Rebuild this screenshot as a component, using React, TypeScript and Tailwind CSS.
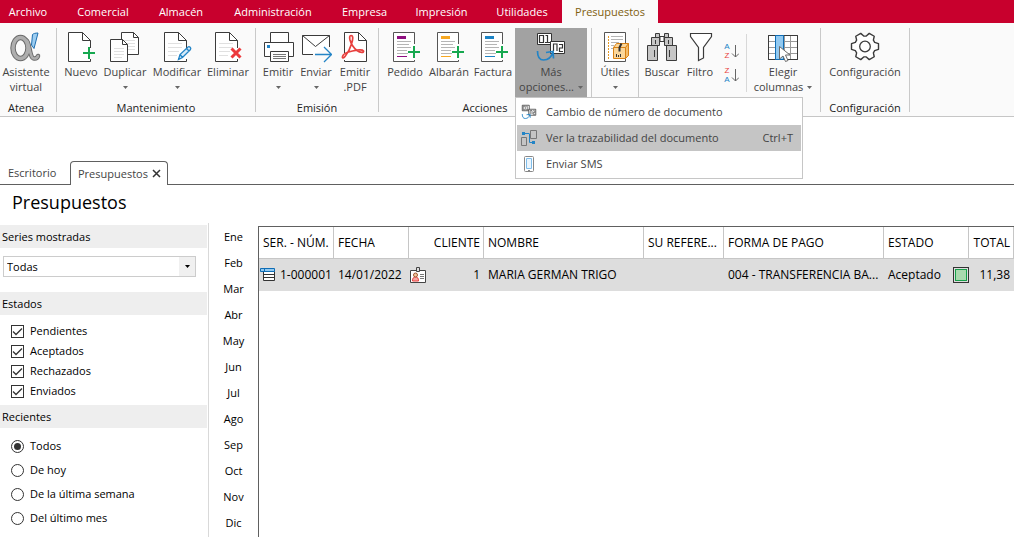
import React, { useState } from 'react';
import { clsx } from 'clsx';

const menuTabs = [
    { name: 'Archivo', className: 'w-[62px] pr-1.5' },
    { name: 'Comercial', className: 'w-[82px]' },
    { name: 'Almacén', className: 'w-[74px]' },
    { name: 'Administración', className: 'w-[110px]' },
    { name: 'Empresa', className: 'w-[73px]' },
    { name: 'Impresión', className: 'w-[81px]' },
    { name: 'Utilidades', className: 'w-20' },
    { name: 'Presupuestos', className: 'w-24' },
];

const months = ['Ene', 'Feb', 'Mar', 'Abr', 'May', 'Jun', 'Jul', 'Ago', 'Sep', 'Oct', 'Nov', 'Dic'];
const states = ['Pendientes', 'Aceptados', 'Rechazados', 'Enviados'];
const recents = ['Todos', 'De hoy', 'De la última semana', 'Del último mes'];

const Icon: React.FC<{ children: React.ReactNode }> = ({ children }) => (
    <svg className="h-8 w-8 shrink-0" viewBox="0 0 32 32" fill="none" stroke="#3b3b3b" aria-hidden="true">
        {children}
    </svg>
);

const AlphaIcon = () => (
    <Icon>
        <ellipse cx="10.5" cy="17" rx="7.5" ry="10.5" stroke="#6a6a6a" strokeWidth="5.5" />
        <path d="M17 10c3 3 2.500 17 7 17.500 2.500.3 3.500-1 4-2.500" stroke="#6a6a6a" strokeWidth="4.500" strokeLinecap="round" />
        <ellipse cx="10.5" cy="17" rx="7.5" ry="10.5" stroke="#aeaeae" strokeWidth="3.5" />
        <path d="M17 10c3 3 2.500 17 7 17.500 2.500.3 3.500-1 4-2.500" stroke="#aeaeae" strokeWidth="2.600" strokeLinecap="round" />
        <path d="M22.500 3.500c1-1 3-1.500 5.500-1.500L24 17.500l-2.500-3.500z" fill="#9ccdf1" stroke="#1f6fb0" />
    </Icon>
);

const PageOutline = () => (
    <>
        <path d="M25.500 17V9.500L17.500 1.500H3.500V30.500H25.500V28" fill="#fff" />
        <path d="M17.500 1.500V9.500H25.500" />
    </>
);

const PageLines = () => <path d="M7 12.500h14M7 16.500h14M7 20.500h11M7 24.500h9" stroke="#e0e0e0" />;

const NewIcon = () => (
    <Icon>
        <PageOutline />
        <path d="M18 22h12M24 16v12" stroke="#16a84f" strokeWidth="2" />
    </Icon>
);

const DuplicateIcon = () => (
    <Icon>
        <path d="M12.500 1.500H24.500L29.500 6.500V23.500H12.500z" fill="#fff" />
        <path d="M24.500 1.500V6.500H29.500" />
        <path d="M15 9.500h11M15 12.500h11M15 15.500h11M15 18.500h11" stroke="#e0e0e0" />
        <path d="M1.500 8.500H13.500L18.500 13.500V30.500H1.500z" fill="#fff" />
        <path d="M13.500 8.500V13.500H18.500" />
        <path d="M5 17.500h10M5 20.500h10M5 23.500h10M5 26.500h8" stroke="#e0e0e0" />
    </Icon>
);

const EditIcon = () => (
    <Icon>
        <PageOutline />
        <PageLines />
        <path d="M17.500 28.500l1.500-5 8-7.500c1.500-1 3.500 1 2.500 2.500l-8 8zM19 23.500l2.500 3M25.500 17.500l2.500 2.500" fill="#d7ebf9" stroke="#2384c6" strokeWidth="1.300" />
    </Icon>
);

const DeleteIcon = () => (
    <Icon>
        <PageOutline />
        <PageLines />
        <path d="M19.500 17.500l9 9M28.500 17.500l-9 9" stroke="#ec3a3d" strokeWidth="3" />
    </Icon>
);

const PrintIcon = () => (
    <Icon>
        <path d="M8.500 11.500V1.500H26.500V11.500" fill="#fff" />
        <path d="M8 25.500H2.500V11.500H31.500V25.500H27" fill="#fff" />
        <path d="M8.500 20.500H26.500V30.500H8.500z" fill="#fff" />
        <path d="M11 23.500h13M11 25.500h13M11 27.500h13" stroke="#777" />
        <path d="M5 14h3v3H5z" fill="#2384c6" stroke="none" />
    </Icon>
);

const SendIcon = () => (
    <Icon>
        <path d="M13 23.500H2.500V4.500H29.500V16" fill="#fff" />
        <path d="M2.500 4.500l13 11 14-11" />
        <path d="M15 23.500H31M24 16l7.500 7.500L24 31" stroke="#2384c6" strokeWidth="1.300" />
    </Icon>
);

const PdfIcon = () => (
    <Icon>
        <path d="M5.500 1.500H19.500L27.500 9.500V30.500H5.500z" fill="#fff" stroke="none" />
        <path d="M5.500 29V30.500H27.500V9.500L19.500 1.500H5.500V22" />
        <path d="M19.500 1.500V9.500H27.500" />
        <path
            d="M12 4.500c2.500 0 2 4 .5 8.500-1.500 5-4 9.500-6.500 12.500-1.500 2-3 1.500-2.500 0 .5-2.500 5-4.500 10-5.500 4.500-1 10-1.500 11 0 .8 1.600-3 2.200-6.500-.5-4-3-6-7-7-10.500-.6-2.500-.5-4.500 1-4.500z"
            stroke="#e8403e"
            strokeWidth="1.700"
        />
    </Icon>
);

const OrderIcon: React.FC<{ color: string }> = ({ color }) => (
    <Icon>
        <path d="M25.500 13V1.500H4.500V30.500H25.500V29" fill="#fff" stroke="#555" />
        <path d="M8 5h9v3H8z" fill={color} stroke="none" />
        <path d="M8 10.500h14M8 13.500h12M8 16.500h14M8 19.500h10M8 22.500h11" stroke="#b5b5b5" />
        <path d="M8 25.500h10" stroke={color} />
        <path d="M19 21h12M25 15v12" stroke="#16a84f" strokeWidth="2" />
    </Icon>
);

const NumbersDrawing = () => (
    <>
        <path d="M2.500 2.500H16.500V13.500H2.500z" fill="#fff" stroke="#333" />
        <path d="M4.500 4.500h4v7h-4zM10.500 4.500h2v7M10 11.500h5" stroke="#333" strokeWidth="1.200" />
        <path d="M15.500 10.500H29.500V22.500H15.500z" fill="#fff" stroke="#333" />
        <path d="M18.500 20v-7h3.500v7M24 13.500h3.500v3.500H24.500v3.500h3.500" stroke="#333" strokeWidth="1.200" />
        <path d="M2.500 20c0 6 2 9 6 9 5 0 8-3 9.500-8M11 21.500l7-1 .5 7" stroke="#2384c6" strokeWidth="1.700" />
    </>
);

const ToolsIcon = () => (
    <Icon>
        <path d="M5.500 1.500H26.500V30.500H5.500z" fill="#fff" stroke="#555" />
        <path d="M12 5.500h12M12 8.500h12M12 11.500h8M12 14.500h3M12 17.500h2" stroke="#b5b5b5" />
        <path d="M9.500 5v23" stroke="#e59a25" strokeDasharray="2 1" />
        <path d="M14.500 16.500L17.500 12.500H29.500V24.500L26.500 27.500H14.500z" fill="#fbd699" stroke="#d98215" strokeLinejoin="round" />
        <path d="M26.500 16.500L29.500 12.500V24.500L26.500 27.500z" fill="#f4bb68" stroke="#d98215" strokeLinejoin="round" />
        <path d="M14.500 16.500h12" stroke="#d98215" />
        <path d="M22.500 12.500L20.500 16.500V20.500" stroke="#333" strokeWidth="2" />
        <path d="M17.500 23v3M19.500 24v2M21.500 23v3" stroke="#333" />
    </Icon>
);

const BinocularsIcon = () => (
    <Icon>
        <path d="M14 5.500h4v5h-4z" fill="#fff" />
        <path d="M9.500 2.500h4v4h-4zM18.500 2.500h4v4h-4zM5.500 6.500h8v8h-8zM18.500 6.500h8v8h-8zM1.500 14.500h10v15h-10zM20.500 14.500h10v15h-10z" fill="#c6c6c6" />
        <path d="M9.500 9v4M22.500 9v4M8.500 19v7M23.500 19v7" />
    </Icon>
);

const FilterIcon = () => (
    <Icon>
        <path d="M6.500 2.500H27.500V5.500L19.500 16.500V27L14.500 29.500V16.500L6.500 5.500z" fill="#fff" strokeWidth="1.200" />
    </Icon>
);

const ColumnsIcon = () => (
    <Icon>
        <path d="M1.500 4.500H30.500V28.500H1.500z" fill="#fff" />
        <path d="M2 10.500h28M2 16.500h28M2 22.500h28M17.500 5v23M23.500 5v23" stroke="#9a9a9a" />
        <path d="M1.500 4.500H30.500V28.500H1.500z" />
        <path d="M8.500 4.500H16.500V28.500H8.500z" fill="#92c9f0" stroke="#0f6db5" />
        <path d="M12.500 15.500V28l3.500-3 2.500 5.500 2.500-1-2.500-5.500h4.500z" fill="#fff" stroke="#6b6b6b" />
    </Icon>
);

// six teeth, one every 60 degrees
const gearPoints = [0, 60, 120, 180, 240, 300]
    .flatMap((deg) => [[-23, 10.5], [-12, 13.8], [12, 13.8], [23, 10.5]].map(([off, r]) => {
        const a = ((deg + off) * Math.PI) / 180;
        return `${16 + r * Math.cos(a)},${15.5 + r * Math.sin(a)}`;
    }))
    .join(' ');

const GearIcon = () => (
    <Icon>
        <polygon points={gearPoints} fill="#fff" strokeWidth="1.400" strokeLinejoin="round" />
        <circle cx="16" cy="15.500" r="5.300" strokeWidth="1.300" />
    </Icon>
);

const Caret: React.FC<{ className?: string }> = ({ className }) => (
    <svg className={clsx('inline-block h-[3px] w-[5px] shrink-0', className)} viewBox="0 0 5 3" aria-hidden="true">
        <path d="M0 0h5L2.500 3z" fill="currentColor" />
    </svg>
);

interface ToolButtonProps {
    icon: React.ReactNode;
    label: string;
    second?: string;
    caret?: boolean;
    className: string;
    onClick?: () => void;
}

const ToolButton: React.FC<ToolButtonProps> = ({ icon, label, second, caret, className, onClick }) => (
    <button
        type="button"
        onClick={onClick}
        className={clsx('flex h-[69px] flex-col items-center whitespace-nowrap pt-[3px] leading-[15px]', className)}
    >
        {icon}
        <span className="mt-px">{label}</span>
        {(second || caret) && (
            <span className="flex h-[15px] items-center justify-center gap-1">
                {second}
                {caret && <Caret className="mt-px text-[#666]" />}
            </span>
        )}
    </button>
);

const Group: React.FC<{ title?: string; className?: string; children: React.ReactNode }> = ({ title, className, children }) => (
    <div className={clsx('flex h-[84px] flex-col border-r border-[#c9c9c9] px-1', className)}>
        <div className="flex">{children}</div>
        <div className="mt-[3px] text-center leading-4 text-[#222]">{title}</div>
    </div>
);

const SortButton: React.FC<{ first: string; last: string; label: string }> = ({ first, last, label }) => (
    <button type="button" aria-label={label} className="flex h-[18px] items-center justify-center">
        <span className="flex w-2 flex-col text-center font-['Liberation_Sans',sans-serif] text-[8px] leading-[9px]">
            <span className={first === 'A' ? 'text-[#2384c6]' : 'text-[#e8403e]'}>{first}</span>
            <span className={last === 'A' ? 'text-[#2384c6]' : 'text-[#e8403e]'}>{last}</span>
        </span>
        <svg className="h-4 w-2" viewBox="0 0 8 16" fill="none" stroke="#666" aria-hidden="true">
            <path d="M4.500 2v12M1 10.500l3.500 3.500L8 10.500" />
        </svg>
    </button>
);

const OptionsMenu = () => (
    <div className="absolute left-0 top-full z-20 w-72 border border-[#c6c6c6] bg-white p-px">
        <button type="button" className="flex h-[26px] w-full items-center gap-2 pl-1 pr-2">
            <svg className="h-4 w-4" viewBox="0 0 32 32" fill="none" strokeWidth="1.500" aria-hidden="true">
                <NumbersDrawing />
            </svg>
            <span className="ml-px">Cambio de número de documento</span>
        </button>
        <button type="button" className="flex h-[26px] w-full items-center gap-2 bg-[#c5c5c5] pl-1 pr-2">
            <svg className="h-4 w-4" viewBox="0 0 16 16" fill="none" stroke="#777" aria-hidden="true">
                <path d="M.5 7.500h5v8h-5zM9.500.5h6v8h-6z" />
                <path d="M2 3.500h6M8.500 3.500v9h5" stroke="#2384c6" />
                <path d="M1 2h3v3H1zM11 11h3v3h-3z" fill="#2384c6" stroke="none" />
            </svg>
            <span className="ml-px">Ver la trazabilidad del documento</span>
            <span className="ml-auto">Ctrl+T</span>
        </button>
        <button type="button" className="flex h-[26px] w-full items-center gap-2 pl-1 pr-2">
            <svg className="h-4 w-4" viewBox="0 0 16 16" fill="none" stroke="#888" aria-hidden="true">
                <rect x="3.500" y=".5" width="9" height="15" rx="1" />
                <path d="M5.500 2.500h5v10h-5z" fill="#eaf5fd" stroke="#7fbdea" />
                <path d="M7 14.500h2" />
            </svg>
            <span className="ml-px">Enviar SMS</span>
        </button>
    </div>
);

const Ribbon = () => {
    const [menuOpen, setMenuOpen] = useState(true);

    return (
        <div className="flex h-[94px] border-b border-[#c6c6c6] bg-[#fafafa] pt-[5px] text-[11px] text-[#444]">
            <Group title="Atenea" className="pl-0">
                <ToolButton icon={<AlphaIcon />} label="Asistente" second="virtual" className="w-[52px]" />
            </Group>
            <Group title="Mantenimiento">
                <ToolButton icon={<NewIcon />} label="Nuevo" className="w-10" />
                <ToolButton icon={<DuplicateIcon />} label="Duplicar" caret className="w-12" />
                <ToolButton icon={<EditIcon />} label="Modificar" caret className="w-14" />
                <ToolButton icon={<DeleteIcon />} label="Eliminar" className="w-[46px]" />
            </Group>
            <Group title="Emisión">
                <ToolButton icon={<PrintIcon />} label="Emitir" caret className="w-9" />
                <ToolButton icon={<SendIcon />} label="Enviar" caret className="w-10" />
                <ToolButton icon={<PdfIcon />} label="Emitir" second=".PDF" className="w-[38px]" />
            </Group>
            <Group title="Acciones">
                <ToolButton icon={<OrderIcon color="#8e0f80" />} label="Pedido" className="w-11" />
                <ToolButton icon={<OrderIcon color="#f7a823" />} label="Albarán" className="w-11" />
                <ToolButton icon={<OrderIcon color="#1c83c5" />} label="Factura" className="w-11" />
                <div className="relative">
                    <ToolButton
                        icon={<Icon><NumbersDrawing /></Icon>}
                        label="Más"
                        second="opciones..."
                        caret
                        className="w-[72px] bg-[#a2a2a2]"
                        onClick={() => setMenuOpen(!menuOpen)}
                    />
                    {menuOpen && <OptionsMenu />}
                </div>
            </Group>
            <Group>
                <ToolButton icon={<ToolsIcon />} label="Útiles" caret className="w-[38px]" />
            </Group>
            <Group>
                <ToolButton icon={<BinocularsIcon />} label="Buscar" className="w-[38px]" />
                <ToolButton icon={<FilterIcon />} label="Filtro" className="w-[38px]" />
                <div className="flex w-6 flex-col gap-1.5 pt-3.5">
                    <SortButton first="A" last="Z" label="Orden ascendente" />
                    <SortButton first="Z" last="A" label="Orden descendente" />
                </div>
                <div className="mx-[3px] mt-1.5 h-[58px] w-px bg-[#d8d8d8]" />
                <ToolButton icon={<ColumnsIcon />} label="Elegir" second="columnas" caret className="w-[66px]" />
            </Group>
            <Group title="Configuración">
                <ToolButton icon={<GearIcon />} label="Configuración" className="w-20" />
            </Group>
        </div>
    );
};

const SectionTitle: React.FC<{ children: React.ReactNode }> = ({ children }) => (
    <h2 className="mr-px h-[23px] bg-[#eee] pl-0.5 leading-[23px]">{children}</h2>
);

const Sidebar = () => {
    const [checked, setChecked] = useState<string[]>(states);
    const [recent, setRecent] = useState('Todos');

    const toggle = (name: string) =>
        setChecked(checked.includes(name) ? checked.filter((c) => c !== name) : [...checked, name]);

    return (
        <aside className="w-[209px] shrink-0 border-r border-[#d9d9d9] pt-0.5 text-[11px]">
            <SectionTitle>Series mostradas</SectionTitle>
            <div className="relative ml-[3px] mr-3 mt-2 flex h-[21px]">
                <select aria-label="Series mostradas" className="w-full appearance-none border border-[#ccc] bg-white pl-[3px]">
                    <option>Todas</option>
                </select>
                <span className="pointer-events-none absolute inset-y-px right-px flex w-4 items-center justify-center bg-[#f0f0f0]">
                    <Caret />
                </span>
            </div>
            <div className="mt-[15px]">
                <SectionTitle>Estados</SectionTitle>
            </div>
            <div className="pb-1 pl-[11px] pt-1.5">
                {states.map((name) => (
                    <label key={name} className="flex h-5 items-center gap-1.5">
                        <span className="relative flex">
                            <input
                                type="checkbox"
                                checked={checked.includes(name)}
                                onChange={() => toggle(name)}
                                className="peer h-[13px] w-[13px] appearance-none border border-[#333] bg-white"
                            />
                            <svg
                                className="pointer-events-none absolute inset-0 hidden h-[13px] w-[13px] peer-checked:block"
                                viewBox="0 0 13 13"
                                fill="none"
                                stroke="#333"
                                strokeWidth="1.300"
                                aria-hidden="true"
                            >
                                <path d="M2 6.500l3 3 6-6" />
                            </svg>
                        </span>
                        {name}
                    </label>
                ))}
            </div>
            <SectionTitle>Recientes</SectionTitle>
            <div className="pl-[11px] pt-1.5">
                {recents.map((name) => (
                    <label key={name} className="flex h-6 items-center gap-1.5">
                        <input
                            type="radio"
                            name="recientes"
                            checked={recent === name}
                            onChange={() => setRecent(name)}
                            className="h-[13px] w-[13px] appearance-none rounded-full border border-[#333] bg-white bg-clip-content p-0.5 checked:bg-[#333]"
                        />
                        {name}
                    </label>
                ))}
            </div>
        </aside>
    );
};

const RowIcon = () => (
    <svg className="h-4 w-4 shrink-0" viewBox="0 0 16 16" fill="none" stroke="#333" aria-hidden="true">
        <path d="M3.500 4.500h11v9h-11zM3.500 7.500h11M3.500 10.500h11" fill="#fff" />
        <path d="M.5 1.500h14v3H.5z" fill="#92c9f0" stroke="#0f6db5" />
        <path d="M4.500 1.500v3" stroke="#0f6db5" />
    </svg>
);

const ClientIcon = () => (
    <svg className="h-4 w-4" viewBox="0 0 16 16" fill="none" stroke="#444" aria-hidden="true">
        <path d="M.5 3.500h15v12H.5z" fill="#fff" />
        <path d="M6.500.5h3v4h-3z" fill="#ddd" />
        <path d="M2.500 14c0-3 1-4 3-4s3 1 3 4z" fill="#f7a9a5" stroke="#e8403e" />
        <circle cx="5.500" cy="8" r="2" fill="#f1c6a0" stroke="#a2552c" />
        <path d="M10 7.500h4M10 9.500h4M10 11.500h4" stroke="#777" />
    </svg>
);

const headCell = 'whitespace-nowrap border-b border-r border-[#c6c6c6] pl-1 pr-[3px] font-normal';

const DocumentTable = () => (
    <div className="mt-[3px] min-w-0 flex-1 border-l border-t border-[#606060]">
        <table className="w-full table-fixed border-separate border-spacing-0 text-left">
            <colgroup>
                <col className="w-[75px]" />
                <col className="w-[75px]" />
                <col className="w-[75px]" />
                <col />
                <col className="w-20" />
                <col className="w-40" />
                <col className="w-[85px]" />
                <col className="w-[45px]" />
            </colgroup>
            <thead>
                <tr className="h-8">
                    <th className={headCell}>SER. - NÚM.</th>
                    <th className={headCell}>FECHA</th>
                    <th className={clsx(headCell, 'text-right')}>CLIENTE</th>
                    <th className={headCell}>NOMBRE</th>
                    <th className={headCell}>SU REFERE...</th>
                    <th className={headCell}>FORMA DE PAGO</th>
                    <th className={headCell}>ESTADO</th>
                    <th className={clsx(headCell, 'text-right')}>TOTAL</th>
                </tr>
            </thead>
            <tbody>
                <tr className="h-8 bg-[#ddd]">
                    <td className="px-px">
                        <div className="flex items-center gap-1 whitespace-nowrap">
                            <RowIcon />
                            1-000001
                        </div>
                    </td>
                    <td className="whitespace-nowrap pl-1">14/01/2022</td>
                    <td className="pl-px pr-1">
                        <div className="flex items-center justify-between">
                            <ClientIcon />
                            1
                        </div>
                    </td>
                    <td className="whitespace-nowrap px-1">MARIA GERMAN TRIGO</td>
                    <td />
                    <td className="whitespace-nowrap px-1">004 - TRANSFERENCIA BA...</td>
                    <td className="pl-1">
                        <div className="flex items-center justify-between">
                            Aceptado
                            <span className="flex h-4 w-4 border border-[#333] bg-[#ddd] p-px">
                                <span className="flex-1 border border-[#17a04a] bg-[#a9d9ae]" />
                            </span>
                        </div>
                    </td>
                    <td className="px-1 text-right">11,38</td>
                </tr>
            </tbody>
        </table>
    </div>
);

const App: React.FC = () => (
    <div className="flex min-h-screen flex-col bg-white font-['Open_Sans','Noto_Sans',sans-serif] text-[12px] leading-4 text-black">
        <nav className="flex h-[23px] bg-[#c8002d] text-[11px]">
            {menuTabs.map((tab) => (
                <a
                    key={tab.name}
                    href="#"
                    className={clsx(
                        'flex items-center justify-center',
                        tab.className,
                        tab.name === 'Presupuestos' ? 'bg-[#fafafa] text-[#80600e]' : 'text-white',
                    )}
                >
                    {tab.name}
                </a>
            ))}
        </nav>
        <Ribbon />
        <div className="flex h-[68px] items-end text-[11px] text-[#444]">
            <a href="#" className="flex h-6 w-[70px] items-center border-b border-[#606060] pl-2">Escritorio</a>
            <div className="flex h-6 w-[98px] items-center gap-1 rounded-t border border-b-0 border-[#606060] pl-[7px]">
                <a href="#">Presupuestos</a>
                <button type="button" aria-label="Cerrar">
                    <svg className="h-[9px] w-[9px]" viewBox="0 0 9 9" stroke="#333" strokeWidth="1.500" aria-hidden="true">
                        <path d="M1 1l7 7M8 1L1 8" />
                    </svg>
                </button>
            </div>
            <div className="h-6 flex-1 border-b border-[#606060]" />
        </div>
        <h1 className="h-[38px] pl-3 text-[18px] leading-[34px]">Presupuestos</h1>
        <main className="flex flex-1">
            <Sidebar />
            <ul className="w-[49px] shrink-0 pt-px text-center text-[11px]">
                {months.map((month) => (
                    <li key={month} className="h-[26px]">
                        <a href="#" className="block leading-[26px]">{month}</a>
                    </li>
                ))}
            </ul>
            <DocumentTable />
        </main>
    </div>
);

export default App;
